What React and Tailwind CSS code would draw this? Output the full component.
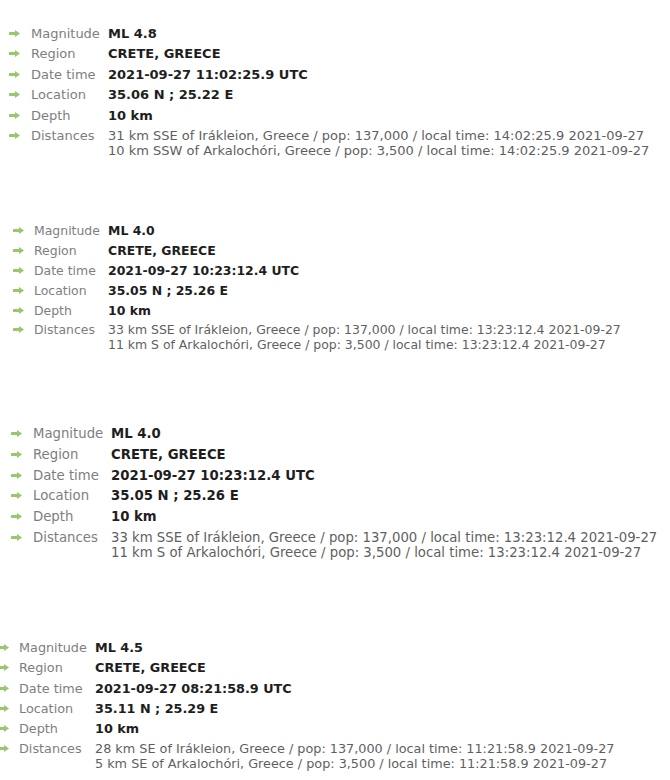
import React from 'react';

const quakes = [
  {
    mag: 'ML 4.8',
    region: 'CRETE, GREECE',
    time: '2021-09-27 11:02:25.9 UTC',
    loc: '35.06 N ; 25.22 E',
    depth: '10 km',
    dist: [
      '31 km SSE of Irákleion, Greece / pop: 137,000 / local time: 14:02:25.9 2021-09-27',
      '10 km SSW of Arkalochóri, Greece / pop: 3,500 / local time: 14:02:25.9 2021-09-27',
    ],
    box: 'mt-[22.75px] text-[13px]',
    row: 'py-[2.75px]',
    arrow: 'ml-[9px] w-[22px]',
    label: 'w-[77px]',
  },
  {
    mag: 'ML 4.0',
    region: 'CRETE, GREECE',
    time: '2021-09-27 10:23:12.4 UTC',
    loc: '35.05 N ; 25.26 E',
    depth: '10 km',
    dist: [
      '33 km SSE of Irákleion, Greece / pop: 137,000 / local time: 13:23:12.4 2021-09-27',
      '11 km S of Arkalochóri, Greece / pop: 3,500 / local time: 13:23:12.4 2021-09-27',
    ],
    box: 'mt-[60.35px] text-[12.45px]',
    row: 'py-[2.4px]',
    arrow: 'ml-[13px] w-[21px]',
    label: 'w-[74px]',
  },
  {
    mag: 'ML 4.0',
    region: 'CRETE, GREECE',
    time: '2021-09-27 10:23:12.4 UTC',
    loc: '35.05 N ; 25.26 E',
    depth: '10 km',
    dist: [
      '33 km SSE of Irákleion, Greece / pop: 137,000 / local time: 13:23:12.4 2021-09-27',
      '11 km S of Arkalochóri, Greece / pop: 3,500 / local time: 13:23:12.4 2021-09-27',
    ],
    box: 'mt-[68.75px] text-[13.25px]',
    row: 'py-[2.85px]',
    arrow: 'ml-[11px] w-[22px]',
    label: 'w-[78px]',
  },
  {
    mag: 'ML 4.5',
    region: 'CRETE, GREECE',
    time: '2021-09-27 08:21:58.9 UTC',
    loc: '35.11 N ; 25.29 E',
    depth: '10 km',
    dist: [
      '28 km SE of Irákleion, Greece / pop: 137,000 / local time: 11:21:58.9 2021-09-27',
      '5 km SE of Arkalochóri, Greece / pop: 3,500 / local time: 11:21:58.9 2021-09-27',
    ],
    box: 'mt-[75.05px] text-[12.8px]',
    row: 'py-[2.6px]',
    arrow: '-ml-[2px] w-[21px]',
    label: 'w-[76px]',
  },
];

// small green "go" arrow used in front of every label
const Arrow = () => (
  <svg width="11" height="7" viewBox="0 0 11 7" className="shrink-0">
    <rect x="0" y="2" width="7" height="3" rx="0.5" fill="#97c86c" />
    <path d="M6 0 L11 3.5 L6 7 Z" fill="#97c86c" />
  </svg>
);

const Row = ({ q, name, children }) => (
  <div className={`flex items-start leading-[15px] ${q.row}`}>
    <div className={`${q.arrow} h-[15px] flex items-center shrink-0`}>
      <Arrow />
    </div>
    <div className={`${q.label} shrink-0 text-[#7e7e7e]`}>{name}</div>
    <div className="whitespace-nowrap">{children}</div>
  </div>
);

const Quake = ({ q }) => (
  <div className={q.box}>
    <Row q={q} name="Magnitude"><b className="text-[#1e1e1e]">{q.mag}</b></Row>
    <Row q={q} name="Region"><b className="text-[#1e1e1e]">{q.region}</b></Row>
    <Row q={q} name="Date time"><b className="text-[#1e1e1e]">{q.time}</b></Row>
    <Row q={q} name="Location"><b className="text-[#1e1e1e]">{q.loc}</b></Row>
    <Row q={q} name="Depth"><b className="text-[#1e1e1e]">{q.depth}</b></Row>
    <Row q={q} name="Distances">
      <div className="text-[#5f5f5f]">
        {q.dist.map((d, i) => (
          <div key={i}>{d}</div>
        ))}
      </div>
    </Row>
  </div>
);

export default function App() {
  return (
    <div className="w-[670px] h-[780px] overflow-hidden bg-white font-['DejaVu_Sans',sans-serif] flex flex-col">
      {quakes.map((q, i) => (
        <Quake key={i} q={q} />
      ))}
    </div>
  );
}
